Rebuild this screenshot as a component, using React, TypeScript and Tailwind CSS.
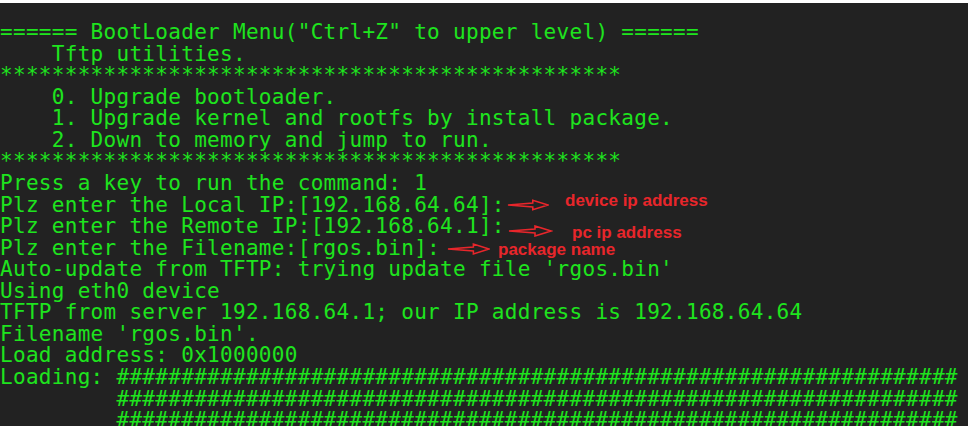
const lines = [
  '====== BootLoader Menu("Ctrl+Z" to upper level) ======',
  "    Tftp utilities.",
  "*".repeat(48),
  "    0. Upgrade bootloader.",
  "    1. Upgrade kernel and rootfs by install package.",
  "    2. Down to memory and jump to run.",
  "*".repeat(48),
  "Press a key to run the command: 1",
  "Plz enter the Local IP:[192.168.64.64]:",
  "Plz enter the Remote IP:[192.168.64.1]:",
  "Plz enter the Filename:[rgos.bin]:",
  "Auto-update from TFTP: trying update file 'rgos.bin'",
  "Using eth0 device",
  "TFTP from server 192.168.64.1; our IP address is 192.168.64.64",
  "Filename 'rgos.bin'.",
  "Load address: 0x1000000",
  "Loading: " + "#".repeat(65),
  "         " + "#".repeat(65),
  "         " + "#".repeat(65),
];

// red notes drawn over the terminal
const notes = [
  { pos: "left-[507px] top-[186px]", arrow: "w-[42px] mt-[10px]", text: "ml-[16px] mt-[2px]", label: "device ip address" },
  { pos: "left-[507px] top-[216px]", arrow: "w-[46px] mt-[6px]", text: "ml-[19px] mt-[4px]", label: "pc ip address" },
  { pos: "left-[447px] top-[235px]", arrow: "w-[43px] mt-[5px]", text: "ml-[8px] mt-[2px]", label: "package name" },
];

const Arrow = ({ className }: { className: string }) => (
  <svg viewBox="0 0 44 12" className={`${className} h-[12px] shrink-0`} fill="none">
    <path
      d="M1 6 L27 4 L27 1 L43 6 L27 11 L27 8 Z"
      stroke="#e8262b"
      strokeWidth="1.6"
      strokeLinejoin="miter"
    />
  </svg>
);

export default function App() {
  return (
    <div className="relative w-[968px] h-[426px] overflow-hidden bg-[#222222] border-t-[3px] border-white">
      <pre
        className="pt-[19px] text-[21px] leading-[21.56px] tracking-[0.3px] text-[#1ee41e] whitespace-pre"
        style={{ fontFamily: '"DejaVu Sans Mono", monospace' }}
      >
        {lines.map((line, i) => (
          <div key={i}>{line}</div>
        ))}
      </pre>

      {notes.map((n) => (
        <div key={n.label} className={`absolute ${n.pos} flex items-start`}>
          <Arrow className={n.arrow} />
          <span
            className={`${n.text} text-[17px] font-bold leading-[20px] text-[#e8262b] whitespace-nowrap`}
            style={{ fontFamily: '"Liberation Sans", Arial, sans-serif' }}
          >
            {n.label}
          </span>
        </div>
      ))}
    </div>
  );
}
